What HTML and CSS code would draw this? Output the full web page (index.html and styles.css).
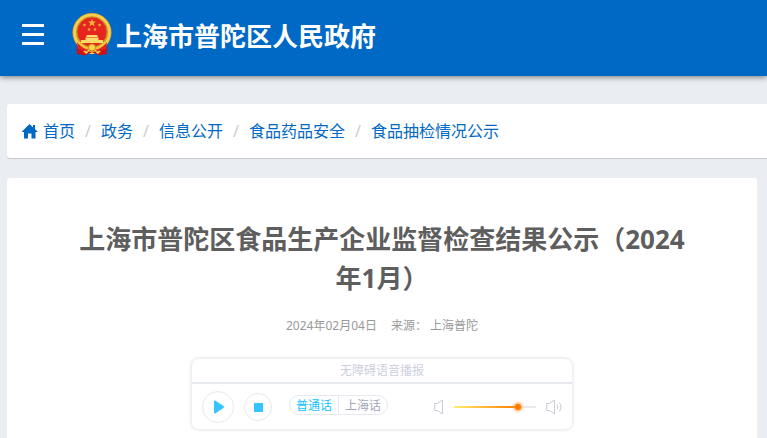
FILE: index.html
```html
<!DOCTYPE html>
<html lang="zh-CN">
<head>
  <meta charset="UTF-8" />
  <meta name="viewport" content="width=device-width, initial-scale=1.0" />
  <title>上海市普陀区人民政府</title>
  <link rel="stylesheet" href="styles.css">
</head>
<body>
  <header class="site-header">
    <button class="menu-btn" type="button" aria-label="菜单">
      <span></span>
      <span></span>
      <span></span>
    </button>
    <a class="brand" href="#">
      <svg class="emblem" viewBox="0 0 40 43" aria-hidden="true">
        <path d="M5 28L5 41L13 42.500L17 40H23L27 42.500L35 41L35 28Z" fill="#cf1218" />
        <circle cx="20" cy="19.500" r="19.500" fill="#e0a32a" />
        <circle cx="20" cy="19.500" r="17.500" fill="none" stroke="#f5cf52" stroke-width="2.500" />
        <circle cx="20" cy="19" r="15" fill="#e62420" stroke="#c98716" />
        <path d="M20 5.500L21 8.500H24L21.700 10.300L22.600 13.300L20 11.500L17.400 13.300L18.300 10.300L16 8.500H19Z" fill="#f6b93c" />
        <g fill="#e9a83a">
          <circle cx="12.500" cy="12" r="1.300" />
          <circle cx="27.500" cy="12" r="1.300" />
          <circle cx="17" cy="16.500" r="1.300" />
          <circle cx="23" cy="16.500" r="1.300" />
        </g>
        <path d="M15 22H25L26 24H14ZM13.500 24.500H26.500V27H31V30H9V27H13.500Z" fill="#fbdc68" />
        <path d="M5 29Q11 36 17 36L15 38L6 36ZM35 29Q29 36 23 36L25 38L34 36Z" fill="#e62420" />
        <path d="M6.500 29Q12 35.500 17 35.500M33.500 29Q28 35.500 23 35.500" fill="none" stroke="#f4c53b" stroke-width="2" />
        <circle cx="20" cy="34.500" r="3.500" fill="#f7d44b" stroke="#cf8719" />
        <path d="M11 38L17 38.500L14 41ZM29 38L23 38.500L26 41ZM17 41L20 39L23 41Z" fill="#f8d348" />
      </svg>
      <span class="brand-name">上海市普陀区人民政府</span>
    </a>
  </header>

  <main class="page">
    <nav class="breadcrumb" aria-label="当前位置">
      <ol>
        <li>
          <a href="#">
            <svg class="home-icon" viewBox="0 0 16 15" aria-hidden="true">
              <path d="M7.500 0L15.500 7.500V8H13.500V14.500H9.500V9.500H6V14.500H2V8H0V7.500Z" fill="currentColor" />
              <path d="M11 1H13V6L11 4Z" fill="currentColor" />
            </svg>
            首页
          </a>
        </li>
        <li><a href="#">政务</a></li>
        <li><a href="#">信息公开</a></li>
        <li><a href="#">食品药品安全</a></li>
        <li><a href="#">食品抽检情况公示</a></li>
      </ol>
    </nav>

    <article class="article">
      <h1>上海市普陀区食品生产企业监督检查结果公示（2024年1月）</h1>
      <p class="meta">
        <time datetime="2024-02-04">2024年02月04日</time>
        <span>来源： 上海普陀</span>
      </p>

      <section class="player" aria-label="语音播报">
        <div class="player-title">无障碍语音播报</div>
        <div class="controls">
          <button class="round-btn play" type="button" aria-label="播放">
            <svg width="12" height="14" viewBox="0 0 12 14"><path d="M1 1.500Q1 0 2.500 .7L10.500 6Q11.500 7 10.500 8L2.500 13.300Q1 14 1 12.500Z" fill="currentColor" /></svg>
          </button>
          <button class="round-btn stop" type="button" aria-label="停止">
            <svg width="9" height="9" viewBox="0 0 9 9"><rect width="9" height="9" fill="currentColor" /></svg>
          </button>
          <div class="lang">
            <button class="active" type="button">普通话</button>
            <button type="button">上海话</button>
          </div>
          <div class="volume">
            <svg width="10" height="16" viewBox="0 0 10 16" aria-hidden="true"><path d="M.7 4.500H3.500L8.500 1V15L3.500 11.500H.7Z" /></svg>
            <input type="range" min="0" max="100" value="80" aria-label="音量">
            <svg width="16" height="16" viewBox="0 0 16 16" aria-hidden="true"><path d="M.7 4.500H3.500L8.500 1V15L3.500 11.500H.7ZM11 5.500Q12.700 8 11 10.500M13.300 3.500Q16.700 8 13.300 12.500" /></svg>
          </div>
        </div>
      </section>
    </article>
  </main>
</body>
</html>
```

FILE: styles.css
```css
:root {
  --blue: #0068c5;
  --page-bg: #eaedf1;
  --cyan: #35c4ff;
  --line: #e6eaee;
  --muted: #cdcfe0;
}

* {
  box-sizing: border-box;
}

body {
  margin: 0;
  font-family: "Noto Sans", "Noto Sans CJK SC", sans-serif;
  background-color: var(--page-bg);
  color: #5e5e5e;
}

a {
  color: var(--blue);
  text-decoration: none;
}

button {
  margin: 0;
  padding: 0;
  border: none;
  background: none;
  font-family: inherit;
  cursor: pointer;
}

/* === HEADER === */
.site-header {
  display: flex;
  align-items: center;
  gap: 28px;
  height: 76px;
  padding: 0 22px 8px;
  background-color: var(--blue);
  box-shadow: 0 1px 6px rgba(0, 0, 0, 0.5);
}

.menu-btn {
  display: flex;
  flex-direction: column;
  gap: 6px;
  width: 22px;
}

.menu-btn span {
  height: 3px;
  background-color: #fff;
}

.brand {
  display: flex;
  align-items: center;
  gap: 4px;
  color: #fff;
}

.emblem {
  width: 40px;
  height: 43px;
}

.brand-name {
  padding-top: 4px;
  font-size: 26px;
  font-weight: bold;
  line-height: 40px;
  white-space: nowrap;
}

/* === CONTENT === */
.page {
  padding: 28px 10px 0 7px;
}

.breadcrumb {
  margin: 0 -10px 20px 0;
  padding: 15px;
  border-radius: 3px 0 0 3px;
  background-color: #fff;
  box-shadow: 0 1px 1px rgba(0, 0, 0, 0.15);
}

.breadcrumb ol {
  display: flex;
  flex-wrap: wrap;
  margin: 0;
  padding: 0;
  list-style: none;
  font-size: 16px;
  line-height: 24px;
}

.breadcrumb li {
  display: flex;
}

.breadcrumb li + li::before {
  content: "/";
  width: 26px;
  color: #ccc;
  text-align: center;
}

.breadcrumb a {
  display: flex;
  align-items: center;
  gap: 5px;
}

.home-icon {
  width: 16px;
  height: 15px;
}

.article {
  padding: 42px 60px 8px;
  border-radius: 3px 3px 0 0;
  background-color: #fff;
  text-align: center;
}

.article h1 {
  margin: 0 0 20px;
  font-size: 26px;
  line-height: 39px;
}

.meta {
  display: flex;
  justify-content: center;
  gap: 14px;
  margin: 0 0 24px;
  color: #999;
  font-size: 12px;
  line-height: 16px;
}

/* === AUDIO PLAYER === */
.player {
  max-width: 382px;
  margin: 0 auto;
  border: 1px solid #f0f0f2;
  border-radius: 8px;
  box-shadow: 0 0 3px rgba(0, 0, 0, 0.14);
}

.player-title {
  border-bottom: 2px solid var(--line);
  color: var(--muted);
  font-size: 12px;
  line-height: 23px;
}

.controls {
  display: flex;
  align-items: center;
  gap: 10px;
  padding: 7px 10px 6px;
}

.round-btn {
  display: flex;
  align-items: center;
  justify-content: center;
  width: 28px;
  height: 28px;
  border: 1px solid #e8e8f2;
  border-radius: 50%;
  color: var(--cyan);
}

.round-btn.play {
  width: 32px;
  height: 32px;
  padding-left: 2px;
}

.lang {
  display: flex;
  height: 20px;
  margin: 0 auto 4px 7px;
  border: 1px solid #e8e8f2;
  border-radius: 10px;
}

.lang button {
  padding: 1px 6px 0;
  color: #a3a5b8;
  font-size: 12px;
  line-height: 18px;
}

.lang button + button {
  border-left: 1px solid #e8e8f2;
}

.lang .active {
  color: #15bfff;
}

.volume {
  display: flex;
  align-items: center;
  gap: 10px;
}

.volume svg {
  fill: none;
  stroke: #c9cbd4;
  stroke-width: 1;
}

.volume input {
  width: 82px;
  height: 16px;
  margin: 0;
  appearance: none;
  background: none;
  cursor: pointer;
}

.volume input::-webkit-slider-runnable-track {
  height: 2px;
  background: linear-gradient(to right, #ffee70, #ff7e00) 0 0 / 77% 100% no-repeat var(--line);
}

.volume input::-webkit-slider-thumb {
  width: 6px;
  height: 6px;
  margin-top: -2px;
  appearance: none;
  border-radius: 50%;
  background-color: #ff7e00;
  box-shadow: 0 0 3px 1px #ff9c3c;
}
```
